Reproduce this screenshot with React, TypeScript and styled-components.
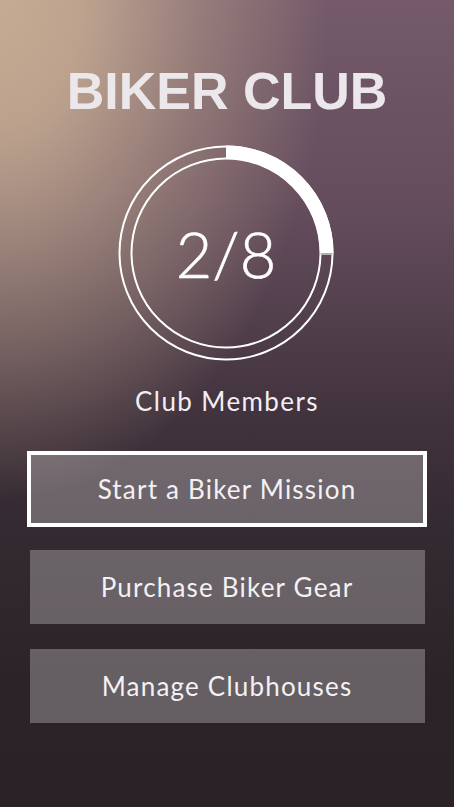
import React from "react";
import styled, { createGlobalStyle } from "styled-components";

const GlobalStyle = createGlobalStyle`
  html, body {
    margin: 0;
    padding: 0;
    height: 100%;
    background: #2a2227;
  }
  #root {
    min-height: 100%;
  }
`;

const Screen = styled.div`
  min-height: 807px;
  display: flex;
  flex-direction: column;
  align-items: center;
  padding-top: 65px;
  box-sizing: border-box;
  background:
    radial-gradient(
      330px 500px at 0 0,
      rgba(197, 171, 146, 1) 0%,
      rgba(197, 171, 146, 0.9) 25%,
      rgba(190, 165, 142, 0.45) 62%,
      rgba(190, 165, 142, 0) 100%
    ),
    linear-gradient(
      180deg,
      #745a6a 0%,
      #654d5d 25%,
      #54414e 38%,
      #43343f 50%,
      #342a31 65%,
      #2c2329 85%,
      #2a2227 100%
    );
  font-family: Lato, "Open Sans", sans-serif;
`;

const Title = styled.h1`
  margin: 0;
  font-family: "Liberation Sans", Arial, sans-serif;
  font-weight: 700;
  font-size: 52px;
  line-height: 52px;
  color: #ebe7ea;
`;

const Ring = styled.div`
  margin-top: 21px;
  width: 230px;
  height: 230px;
  display: grid;
  place-items: center;
  transform: translateX(-1px);
  & > * {
    grid-area: 1 / 1;
  }
`;

const Count = styled.div`
  font-family: Lato, "Open Sans", sans-serif;
  font-weight: 300;
  font-size: 63px;
  line-height: 63px;
  color: #ffffff;
  -webkit-text-stroke: 0.6px #ffffff;
`;

const Label = styled.div`
  margin-top: 18px;
  font-size: 26px;
  line-height: 31px;
  letter-spacing: 1.4px;
  color: #f2eff2;
`;

const Menu = styled.div`
  margin-top: 34px;
  display: flex;
  flex-direction: column;
  align-items: center;
  gap: 25px;
`;

const MenuButton = styled.button<{ $selected?: boolean }>`
  box-sizing: border-box;
  width: ${(p) => (p.$selected ? "400px" : "395px")};
  height: ${(p) => (p.$selected ? "76px" : "74px")};
  margin-bottom: ${(p) => (p.$selected ? "-2px" : "0")};
  border: ${(p) => (p.$selected ? "4px solid #ffffff" : "none")};
  border-radius: 0;
  background: rgba(255, 255, 255, 0.27);
  color: #f3f1f3;
  font-family: Lato, "Open Sans", sans-serif;
  font-size: 26px;
  line-height: 31px;
  letter-spacing: 1.2px;
  padding: 0;
  display: flex;
  align-items: center;
  justify-content: center;
  cursor: pointer;
`;

function ProgressRing({ value, total }: { value: number; total: number }) {
  const c = 115;
  const rArc = 100.75;
  const angle = (value / total) * Math.PI * 2;
  const ex = c + rArc * Math.sin(angle);
  const ey = c - rArc * Math.cos(angle);
  const large = angle > Math.PI ? 1 : 0;
  const ax = c + 94 * Math.sin(angle);
  const ay = c - 94 * Math.cos(angle);
  const bx = c + 107.5 * Math.sin(angle);
  const by = c - 107.5 * Math.cos(angle);
  return (
    <svg width="230" height="230" viewBox="0 0 230 230">
      <circle cx={c} cy={c} r={106.5} fill="none" stroke="#ffffff" strokeWidth={2} />
      <circle cx={c} cy={c} r={94.5} fill="none" stroke="#ffffff" strokeWidth={2} />
      <path
        d={`M ${c} ${c - rArc} A ${rArc} ${rArc} 0 ${large} 1 ${ex} ${ey}`}
        fill="none"
        stroke="#ffffff"
        strokeWidth={13.5}
        strokeLinecap="butt"
      />
      <line x1={ax} y1={ay + 1} x2={bx} y2={by + 1} stroke="#cfcfcf" strokeWidth={1.5} />
    </svg>
  );
}

export default function App() {
  return (
    <>
      <GlobalStyle />
      <Screen>
        <Title>BIKER CLUB</Title>
        <Ring>
          <ProgressRing value={2} total={8} />
          <Count>2/8</Count>
        </Ring>
        <Label>Club Members</Label>
        <Menu>
          <MenuButton $selected>Start a Biker Mission</MenuButton>
          <MenuButton>Purchase Biker Gear</MenuButton>
          <MenuButton>Manage Clubhouses</MenuButton>
        </Menu>
      </Screen>
    </>
  );
}
